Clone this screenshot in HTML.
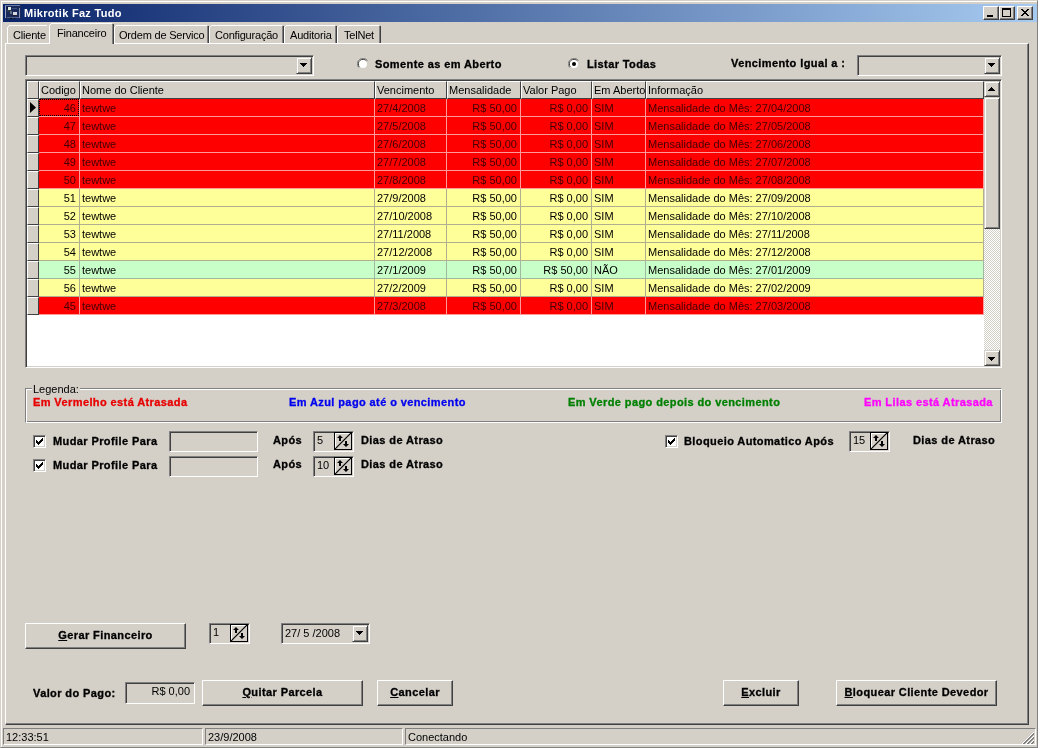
<!DOCTYPE html><html><head><meta charset="utf-8"><style>*{margin:0;padding:0;box-sizing:border-box}
html,body{width:1040px;height:748px;overflow:hidden;background:#fff;font-family:"Liberation Sans",sans-serif;font-size:11px;color:#000;position:relative}
div,span{position:absolute}
.win{left:0;top:0;width:1038px;height:748px;background:#D4D0C8;border:1px solid;border-color:#D4D0C8 #808080 #808080 #D4D0C8;box-shadow:inset 1px 1px #fff}
.title{left:3px;top:4px;width:1034px;height:18px;background:linear-gradient(to right,#0A246A,#A6CAF0)}
.ticon{left:2px;top:1px;width:16px;height:16px}
.ttext{left:21px;top:2px;color:#fff;font-weight:bold;font-size:11px;letter-spacing:0.3px;line-height:14px;white-space:nowrap}
.cbtn{top:2px;width:16px;height:14px;background:#D4D0C8;border:1px solid;border-color:#fff #404040 #404040 #fff;box-shadow:inset -1px -1px #808080}
.page{left:5px;top:43px;width:1024px;height:682px;border:1px solid;border-color:#fff #404040 #404040 #fff;box-shadow:inset -1px -1px #808080}
.tab{top:25px;height:19px;border-style:solid;border-width:1px 1px 0 1px;border-color:#fff #404040 transparent #fff;box-shadow:inset -1px 0 #808080;background:#D4D0C8;text-align:center;line-height:15px;padding-top:2px;white-space:nowrap}
.tab.sel{top:23px;height:21px;z-index:2;padding-top:1px}
.t{white-space:nowrap;line-height:13px}
.b{font-weight:bold;letter-spacing:0.4px;-webkit-text-stroke:0.3px currentColor}
.sunk{border:1px solid;border-color:#808080 #fff #fff #808080;box-shadow:inset 1px 1px #404040,inset -1px -1px #D4D0C8;background:#D4D0C8}
.btn{border:1px solid;border-color:#fff #404040 #404040 #fff;box-shadow:inset -1px -1px #808080;background:#D4D0C8}
.hc{background:#D4D0C8;border-style:solid;border-width:1px;border-color:#fff #404040 #404040 #fff}
.dc{overflow:hidden}
.track{background-color:#fff;background-image:linear-gradient(45deg,#D4D0C8 25%,transparent 25%,transparent 75%,#D4D0C8 75%),linear-gradient(45deg,#D4D0C8 25%,transparent 25%,transparent 75%,#D4D0C8 75%);background-size:2px 2px;background-position:0 0,1px 1px}
.grp{border:1px solid;border-color:#808080 #fff #fff #808080;box-shadow:inset 1px 1px #fff,inset -1px -1px #808080}
.spb{background:#D4D0C8;border:1px solid #000;box-shadow:inset 1px 1px #fff}
.sp{border:1px solid;border-color:#808080 #fff #fff #808080}
.btn2{border:1px solid;border-color:#D4D0C8 #404040 #404040 #D4D0C8;box-shadow:inset 1px 1px #fff,inset -1px -1px #808080;background:#D4D0C8}
</style></head><body><div style="left:0;top:0;width:1040px;height:748px;will-change:transform;overflow:hidden">
<div class="win"></div>
<div class="title"><svg style="position:absolute;left:2px;top:1px" width="16" height="16" viewBox="0 0 16 16" shape-rendering="crispEdges"><rect x="0" y="0" width="16" height="14" fill="#1a2a5a"/><rect x="0" y="0" width="1" height="13" fill="#98a4c4"/><rect x="0" y="0" width="15" height="1" fill="#6878a0"/><rect x="14" y="3" width="1" height="10" fill="#8894b0"/><rect x="2" y="12" width="12" height="1" fill="#50608a"/><rect x="2" y="2" width="2" height="2" fill="#0a1020"/><rect x="3" y="2" width="3" height="3" fill="#e0ece0"/><rect x="2" y="5" width="3" height="2" fill="#303848"/><rect x="7" y="3" width="5" height="1" fill="#405080"/><rect x="5" y="6" width="2" height="3" fill="#687080"/><rect x="8" y="7" width="4" height="3" fill="#d8d8e4"/><rect x="7" y="10" width="5" height="1" fill="#202030"/><rect x="5" y="13" width="2" height="1" fill="#080808"/><rect x="9" y="13" width="1" height="1" fill="#080808"/></svg><span class="ttext">Mikrotik Faz Tudo</span><div class="cbtn" style="left:980px"><svg style="position:absolute;left:3px;top:8px;" width="6" height="2" viewBox="0 0 6 2" shape-rendering="crispEdges"><path d="M0 0h6v1h-6zM0 1h6v1h-6z" fill="#000"/></svg></div><div class="cbtn" style="left:996px"><svg style="position:absolute;left:2px;top:1px;" width="9" height="9" viewBox="0 0 9 9" shape-rendering="crispEdges"><path d="M0 0h9v1h-9zM0 1h9v1h-9zM0 2h1v1h-1zM8 2h1v1h-1zM0 3h1v1h-1zM8 3h1v1h-1zM0 4h1v1h-1zM8 4h1v1h-1zM0 5h1v1h-1zM8 5h1v1h-1zM0 6h1v1h-1zM8 6h1v1h-1zM0 7h1v1h-1zM8 7h1v1h-1zM0 8h9v1h-9z" fill="#000"/></svg></div><div class="cbtn" style="left:1014px"><svg style="position:absolute;left:3px;top:2px;" width="8" height="7" viewBox="0 0 8 7" shape-rendering="crispEdges"><path d="M0 0h2v1h-2zM6 0h2v1h-2zM1 1h2v1h-2zM5 1h2v1h-2zM2 2h4v1h-4zM3 3h2v1h-2zM2 4h4v1h-4zM1 5h2v1h-2zM5 5h2v1h-2zM0 6h2v1h-2zM6 6h2v1h-2z" fill="#000"/></svg></div></div>
<div class="page"></div>
<div style="left:7px;top:25px;width:42px;height:18px;background:#D4D0C8"></div>
<div style="left:9px;top:25px;width:38px;height:1px;background:#fff"></div>
<div style="left:8px;top:26px;width:1px;height:1px;background:#fff"></div>
<div style="left:7px;top:27px;width:1px;height:16px;background:#fff"></div>
<span class="t" style="left:13px;top:29px;letter-spacing:-0.2px;">Cliente</span>
<div style="left:114px;top:25px;width:95px;height:18px;background:#D4D0C8"></div>
<div style="left:116px;top:25px;width:91px;height:1px;background:#fff"></div>
<div style="left:115px;top:26px;width:1px;height:1px;background:#fff"></div>
<div style="left:114px;top:27px;width:1px;height:16px;background:#fff"></div>
<div style="left:208px;top:26px;width:1px;height:17px;background:#404040"></div>
<div style="left:207px;top:26px;width:1px;height:17px;background:#808080"></div>
<span class="t" style="left:119px;top:29px;letter-spacing:-0.2px;">Ordem de Servico</span>
<div style="left:209px;top:25px;width:75px;height:18px;background:#D4D0C8"></div>
<div style="left:211px;top:25px;width:71px;height:1px;background:#fff"></div>
<div style="left:210px;top:26px;width:1px;height:1px;background:#fff"></div>
<div style="left:209px;top:27px;width:1px;height:16px;background:#fff"></div>
<div style="left:283px;top:26px;width:1px;height:17px;background:#404040"></div>
<div style="left:282px;top:26px;width:1px;height:17px;background:#808080"></div>
<span class="t" style="left:215px;top:29px;letter-spacing:-0.2px;">Configuração</span>
<div style="left:284px;top:25px;width:53px;height:18px;background:#D4D0C8"></div>
<div style="left:286px;top:25px;width:49px;height:1px;background:#fff"></div>
<div style="left:285px;top:26px;width:1px;height:1px;background:#fff"></div>
<div style="left:284px;top:27px;width:1px;height:16px;background:#fff"></div>
<div style="left:336px;top:26px;width:1px;height:17px;background:#404040"></div>
<div style="left:335px;top:26px;width:1px;height:17px;background:#808080"></div>
<span class="t" style="left:290px;top:29px;letter-spacing:-0.2px;">Auditoria</span>
<div style="left:337px;top:25px;width:44px;height:18px;background:#D4D0C8"></div>
<div style="left:339px;top:25px;width:40px;height:1px;background:#fff"></div>
<div style="left:338px;top:26px;width:1px;height:1px;background:#fff"></div>
<div style="left:337px;top:27px;width:1px;height:16px;background:#fff"></div>
<div style="left:380px;top:26px;width:1px;height:17px;background:#404040"></div>
<div style="left:379px;top:26px;width:1px;height:17px;background:#808080"></div>
<span class="t" style="left:344px;top:29px;letter-spacing:-0.2px;">TelNet</span>
<div style="left:49px;top:23px;width:65px;height:21px;background:#D4D0C8;z-index:3"></div>
<div style="left:51px;top:23px;width:61px;height:1px;background:#fff;z-index:3"></div>
<div style="left:50px;top:24px;width:1px;height:1px;background:#fff;z-index:3"></div>
<div style="left:49px;top:25px;width:1px;height:19px;background:#fff;z-index:3"></div>
<div style="left:113px;top:24px;width:1px;height:20px;background:#404040;z-index:3"></div>
<div style="left:112px;top:24px;width:1px;height:20px;background:#808080;z-index:3"></div>
<span class="t" style="left:57px;top:27px;letter-spacing:-0.2px;z-index:3">Financeiro</span>
<div class="sunk" style="left:25px;top:55px;width:289px;height:21px"><div class="btn2" style="left:270px;top:1px;width:16px;height:17px"><svg style="position:absolute;left:3px;top:5px;" width="7" height="4" viewBox="0 0 7 4" shape-rendering="crispEdges"><path d="M0 0h7v1h-7zM1 1h5v1h-5zM2 2h3v1h-3zM3 3h1v1h-1z" fill="#000"/></svg></div></div>
<div class="sunk" style="left:857px;top:55px;width:145px;height:21px"><div class="btn2" style="left:126px;top:1px;width:16px;height:17px"><svg style="position:absolute;left:3px;top:5px;" width="7" height="4" viewBox="0 0 7 4" shape-rendering="crispEdges"><path d="M0 0h7v1h-7zM1 1h5v1h-5zM2 2h3v1h-3zM3 3h1v1h-1z" fill="#000"/></svg></div></div>
<svg style="position:absolute;left:357px;top:58px" width="12" height="12" viewBox="0 0 12 12"><path d="M10.5 2.5A5.5 5.5 0 0 0 1.5 9.5" stroke="#808080" fill="none"/><path d="M9.5 3A4.5 4.5 0 0 0 2.5 9" stroke="#404040" fill="none"/><circle cx="6" cy="6" r="4" fill="#fff"/></svg>
<span class="t b" style="left:375px;top:58px">Somente as em Aberto</span>
<svg style="position:absolute;left:568px;top:58px" width="12" height="12" viewBox="0 0 12 12"><path d="M10.5 2.5A5.5 5.5 0 0 0 1.5 9.5" stroke="#808080" fill="none"/><path d="M9.5 3A4.5 4.5 0 0 0 2.5 9" stroke="#404040" fill="none"/><circle cx="6" cy="6" r="4" fill="#fff"/><circle cx="6" cy="6" r="2" fill="#000"/></svg>
<span class="t b" style="left:587px;top:58px">Listar Todas</span>
<span class="t b" style="left:731px;top:57px">Vencimento Igual a :</span>
<div class="sunk" style="left:25px;top:79px;width:977px;height:289px;background:#fff;overflow:hidden">
<div class="hc" style="left:1px;top:1px;width:12px;height:18px"><span class="t" style="left:1px;top:2px"></span></div>
<div class="hc" style="left:13px;top:1px;width:41px;height:18px"><span class="t" style="left:1px;top:2px">Codigo</span></div>
<div class="hc" style="left:54px;top:1px;width:295px;height:18px"><span class="t" style="left:1px;top:2px">Nome do Cliente</span></div>
<div class="hc" style="left:349px;top:1px;width:72px;height:18px"><span class="t" style="left:1px;top:2px">Vencimento</span></div>
<div class="hc" style="left:421px;top:1px;width:74px;height:18px"><span class="t" style="left:1px;top:2px">Mensalidade</span></div>
<div class="hc" style="left:495px;top:1px;width:71px;height:18px"><span class="t" style="left:1px;top:2px">Valor Pago</span></div>
<div class="hc" style="left:566px;top:1px;width:54px;height:18px"><span class="t" style="left:1px;top:2px">Em Aberto</span></div>
<div class="hc" style="left:620px;top:1px;width:338px;height:18px"><span class="t" style="left:1px;top:2px">Informação</span></div>
<div class="hc" style="left:1px;top:19px;width:12px;height:18px"></div>
<svg style="position:absolute;left:4px;top:22px" width="6" height="11" viewBox="0 0 6 11"><path d="M0 0L6 5.5L0 11z" fill="#000"/></svg>
<div class="dc" style="left:13px;top:19px;width:41px;height:18px;background:#FF0000;color:#400000;border-right:1px solid #FF9A9A;border-bottom:1px solid #FF9A9A"><span class="t" style="right:3px;top:3px">46</span></div>
<div class="dc" style="left:54px;top:19px;width:295px;height:18px;background:#FF0000;color:#400000;border-right:1px solid #FF9A9A;border-bottom:1px solid #FF9A9A"><span class="t" style="left:2px;top:3px">tewtwe</span></div>
<div class="dc" style="left:349px;top:19px;width:72px;height:18px;background:#FF0000;color:#400000;border-right:1px solid #FF9A9A;border-bottom:1px solid #FF9A9A"><span class="t" style="left:2px;top:3px">27/4/2008</span></div>
<div class="dc" style="left:421px;top:19px;width:74px;height:18px;background:#FF0000;color:#400000;border-right:1px solid #FF9A9A;border-bottom:1px solid #FF9A9A"><span class="t" style="right:3px;top:3px">R$ 50,00</span></div>
<div class="dc" style="left:495px;top:19px;width:71px;height:18px;background:#FF0000;color:#400000;border-right:1px solid #FF9A9A;border-bottom:1px solid #FF9A9A"><span class="t" style="right:3px;top:3px">R$ 0,00</span></div>
<div class="dc" style="left:566px;top:19px;width:54px;height:18px;background:#FF0000;color:#400000;border-right:1px solid #FF9A9A;border-bottom:1px solid #FF9A9A"><span class="t" style="left:2px;top:3px">SIM</span></div>
<div class="dc" style="left:620px;top:19px;width:338px;height:18px;background:#FF0000;color:#400000;border-right:1px solid #FF9A9A;border-bottom:1px solid #FF9A9A"><span class="t" style="left:2px;top:3px">Mensalidade do Mês: 27/04/2008</span></div>
<div class="hc" style="left:1px;top:37px;width:12px;height:18px"></div>
<div class="dc" style="left:13px;top:37px;width:41px;height:18px;background:#FF0000;color:#400000;border-right:1px solid #FF9A9A;border-bottom:1px solid #FF9A9A"><span class="t" style="right:3px;top:3px">47</span></div>
<div class="dc" style="left:54px;top:37px;width:295px;height:18px;background:#FF0000;color:#400000;border-right:1px solid #FF9A9A;border-bottom:1px solid #FF9A9A"><span class="t" style="left:2px;top:3px">tewtwe</span></div>
<div class="dc" style="left:349px;top:37px;width:72px;height:18px;background:#FF0000;color:#400000;border-right:1px solid #FF9A9A;border-bottom:1px solid #FF9A9A"><span class="t" style="left:2px;top:3px">27/5/2008</span></div>
<div class="dc" style="left:421px;top:37px;width:74px;height:18px;background:#FF0000;color:#400000;border-right:1px solid #FF9A9A;border-bottom:1px solid #FF9A9A"><span class="t" style="right:3px;top:3px">R$ 50,00</span></div>
<div class="dc" style="left:495px;top:37px;width:71px;height:18px;background:#FF0000;color:#400000;border-right:1px solid #FF9A9A;border-bottom:1px solid #FF9A9A"><span class="t" style="right:3px;top:3px">R$ 0,00</span></div>
<div class="dc" style="left:566px;top:37px;width:54px;height:18px;background:#FF0000;color:#400000;border-right:1px solid #FF9A9A;border-bottom:1px solid #FF9A9A"><span class="t" style="left:2px;top:3px">SIM</span></div>
<div class="dc" style="left:620px;top:37px;width:338px;height:18px;background:#FF0000;color:#400000;border-right:1px solid #FF9A9A;border-bottom:1px solid #FF9A9A"><span class="t" style="left:2px;top:3px">Mensalidade do Mês: 27/05/2008</span></div>
<div class="hc" style="left:1px;top:55px;width:12px;height:18px"></div>
<div class="dc" style="left:13px;top:55px;width:41px;height:18px;background:#FF0000;color:#400000;border-right:1px solid #FF9A9A;border-bottom:1px solid #FF9A9A"><span class="t" style="right:3px;top:3px">48</span></div>
<div class="dc" style="left:54px;top:55px;width:295px;height:18px;background:#FF0000;color:#400000;border-right:1px solid #FF9A9A;border-bottom:1px solid #FF9A9A"><span class="t" style="left:2px;top:3px">tewtwe</span></div>
<div class="dc" style="left:349px;top:55px;width:72px;height:18px;background:#FF0000;color:#400000;border-right:1px solid #FF9A9A;border-bottom:1px solid #FF9A9A"><span class="t" style="left:2px;top:3px">27/6/2008</span></div>
<div class="dc" style="left:421px;top:55px;width:74px;height:18px;background:#FF0000;color:#400000;border-right:1px solid #FF9A9A;border-bottom:1px solid #FF9A9A"><span class="t" style="right:3px;top:3px">R$ 50,00</span></div>
<div class="dc" style="left:495px;top:55px;width:71px;height:18px;background:#FF0000;color:#400000;border-right:1px solid #FF9A9A;border-bottom:1px solid #FF9A9A"><span class="t" style="right:3px;top:3px">R$ 0,00</span></div>
<div class="dc" style="left:566px;top:55px;width:54px;height:18px;background:#FF0000;color:#400000;border-right:1px solid #FF9A9A;border-bottom:1px solid #FF9A9A"><span class="t" style="left:2px;top:3px">SIM</span></div>
<div class="dc" style="left:620px;top:55px;width:338px;height:18px;background:#FF0000;color:#400000;border-right:1px solid #FF9A9A;border-bottom:1px solid #FF9A9A"><span class="t" style="left:2px;top:3px">Mensalidade do Mês: 27/06/2008</span></div>
<div class="hc" style="left:1px;top:73px;width:12px;height:18px"></div>
<div class="dc" style="left:13px;top:73px;width:41px;height:18px;background:#FF0000;color:#400000;border-right:1px solid #FF9A9A;border-bottom:1px solid #FF9A9A"><span class="t" style="right:3px;top:3px">49</span></div>
<div class="dc" style="left:54px;top:73px;width:295px;height:18px;background:#FF0000;color:#400000;border-right:1px solid #FF9A9A;border-bottom:1px solid #FF9A9A"><span class="t" style="left:2px;top:3px">tewtwe</span></div>
<div class="dc" style="left:349px;top:73px;width:72px;height:18px;background:#FF0000;color:#400000;border-right:1px solid #FF9A9A;border-bottom:1px solid #FF9A9A"><span class="t" style="left:2px;top:3px">27/7/2008</span></div>
<div class="dc" style="left:421px;top:73px;width:74px;height:18px;background:#FF0000;color:#400000;border-right:1px solid #FF9A9A;border-bottom:1px solid #FF9A9A"><span class="t" style="right:3px;top:3px">R$ 50,00</span></div>
<div class="dc" style="left:495px;top:73px;width:71px;height:18px;background:#FF0000;color:#400000;border-right:1px solid #FF9A9A;border-bottom:1px solid #FF9A9A"><span class="t" style="right:3px;top:3px">R$ 0,00</span></div>
<div class="dc" style="left:566px;top:73px;width:54px;height:18px;background:#FF0000;color:#400000;border-right:1px solid #FF9A9A;border-bottom:1px solid #FF9A9A"><span class="t" style="left:2px;top:3px">SIM</span></div>
<div class="dc" style="left:620px;top:73px;width:338px;height:18px;background:#FF0000;color:#400000;border-right:1px solid #FF9A9A;border-bottom:1px solid #FF9A9A"><span class="t" style="left:2px;top:3px">Mensalidade do Mês: 27/07/2008</span></div>
<div class="hc" style="left:1px;top:91px;width:12px;height:18px"></div>
<div class="dc" style="left:13px;top:91px;width:41px;height:18px;background:#FF0000;color:#400000;border-right:1px solid #FF9A9A;border-bottom:1px solid #FF9A9A"><span class="t" style="right:3px;top:3px">50</span></div>
<div class="dc" style="left:54px;top:91px;width:295px;height:18px;background:#FF0000;color:#400000;border-right:1px solid #FF9A9A;border-bottom:1px solid #FF9A9A"><span class="t" style="left:2px;top:3px">tewtwe</span></div>
<div class="dc" style="left:349px;top:91px;width:72px;height:18px;background:#FF0000;color:#400000;border-right:1px solid #FF9A9A;border-bottom:1px solid #FF9A9A"><span class="t" style="left:2px;top:3px">27/8/2008</span></div>
<div class="dc" style="left:421px;top:91px;width:74px;height:18px;background:#FF0000;color:#400000;border-right:1px solid #FF9A9A;border-bottom:1px solid #FF9A9A"><span class="t" style="right:3px;top:3px">R$ 50,00</span></div>
<div class="dc" style="left:495px;top:91px;width:71px;height:18px;background:#FF0000;color:#400000;border-right:1px solid #FF9A9A;border-bottom:1px solid #FF9A9A"><span class="t" style="right:3px;top:3px">R$ 0,00</span></div>
<div class="dc" style="left:566px;top:91px;width:54px;height:18px;background:#FF0000;color:#400000;border-right:1px solid #FF9A9A;border-bottom:1px solid #FF9A9A"><span class="t" style="left:2px;top:3px">SIM</span></div>
<div class="dc" style="left:620px;top:91px;width:338px;height:18px;background:#FF0000;color:#400000;border-right:1px solid #FF9A9A;border-bottom:1px solid #FF9A9A"><span class="t" style="left:2px;top:3px">Mensalidade do Mês: 27/08/2008</span></div>
<div class="hc" style="left:1px;top:109px;width:12px;height:18px"></div>
<div class="dc" style="left:13px;top:109px;width:41px;height:18px;background:#FFFF99;color:#000;border-right:1px solid #B0B090;border-bottom:1px solid #B0B090"><span class="t" style="right:3px;top:3px">51</span></div>
<div class="dc" style="left:54px;top:109px;width:295px;height:18px;background:#FFFF99;color:#000;border-right:1px solid #B0B090;border-bottom:1px solid #B0B090"><span class="t" style="left:2px;top:3px">tewtwe</span></div>
<div class="dc" style="left:349px;top:109px;width:72px;height:18px;background:#FFFF99;color:#000;border-right:1px solid #B0B090;border-bottom:1px solid #B0B090"><span class="t" style="left:2px;top:3px">27/9/2008</span></div>
<div class="dc" style="left:421px;top:109px;width:74px;height:18px;background:#FFFF99;color:#000;border-right:1px solid #B0B090;border-bottom:1px solid #B0B090"><span class="t" style="right:3px;top:3px">R$ 50,00</span></div>
<div class="dc" style="left:495px;top:109px;width:71px;height:18px;background:#FFFF99;color:#000;border-right:1px solid #B0B090;border-bottom:1px solid #B0B090"><span class="t" style="right:3px;top:3px">R$ 0,00</span></div>
<div class="dc" style="left:566px;top:109px;width:54px;height:18px;background:#FFFF99;color:#000;border-right:1px solid #B0B090;border-bottom:1px solid #B0B090"><span class="t" style="left:2px;top:3px">SIM</span></div>
<div class="dc" style="left:620px;top:109px;width:338px;height:18px;background:#FFFF99;color:#000;border-right:1px solid #B0B090;border-bottom:1px solid #B0B090"><span class="t" style="left:2px;top:3px">Mensalidade do Mês: 27/09/2008</span></div>
<div class="hc" style="left:1px;top:127px;width:12px;height:18px"></div>
<div class="dc" style="left:13px;top:127px;width:41px;height:18px;background:#FFFF99;color:#000;border-right:1px solid #B0B090;border-bottom:1px solid #B0B090"><span class="t" style="right:3px;top:3px">52</span></div>
<div class="dc" style="left:54px;top:127px;width:295px;height:18px;background:#FFFF99;color:#000;border-right:1px solid #B0B090;border-bottom:1px solid #B0B090"><span class="t" style="left:2px;top:3px">tewtwe</span></div>
<div class="dc" style="left:349px;top:127px;width:72px;height:18px;background:#FFFF99;color:#000;border-right:1px solid #B0B090;border-bottom:1px solid #B0B090"><span class="t" style="left:2px;top:3px">27/10/2008</span></div>
<div class="dc" style="left:421px;top:127px;width:74px;height:18px;background:#FFFF99;color:#000;border-right:1px solid #B0B090;border-bottom:1px solid #B0B090"><span class="t" style="right:3px;top:3px">R$ 50,00</span></div>
<div class="dc" style="left:495px;top:127px;width:71px;height:18px;background:#FFFF99;color:#000;border-right:1px solid #B0B090;border-bottom:1px solid #B0B090"><span class="t" style="right:3px;top:3px">R$ 0,00</span></div>
<div class="dc" style="left:566px;top:127px;width:54px;height:18px;background:#FFFF99;color:#000;border-right:1px solid #B0B090;border-bottom:1px solid #B0B090"><span class="t" style="left:2px;top:3px">SIM</span></div>
<div class="dc" style="left:620px;top:127px;width:338px;height:18px;background:#FFFF99;color:#000;border-right:1px solid #B0B090;border-bottom:1px solid #B0B090"><span class="t" style="left:2px;top:3px">Mensalidade do Mês: 27/10/2008</span></div>
<div class="hc" style="left:1px;top:145px;width:12px;height:18px"></div>
<div class="dc" style="left:13px;top:145px;width:41px;height:18px;background:#FFFF99;color:#000;border-right:1px solid #B0B090;border-bottom:1px solid #B0B090"><span class="t" style="right:3px;top:3px">53</span></div>
<div class="dc" style="left:54px;top:145px;width:295px;height:18px;background:#FFFF99;color:#000;border-right:1px solid #B0B090;border-bottom:1px solid #B0B090"><span class="t" style="left:2px;top:3px">tewtwe</span></div>
<div class="dc" style="left:349px;top:145px;width:72px;height:18px;background:#FFFF99;color:#000;border-right:1px solid #B0B090;border-bottom:1px solid #B0B090"><span class="t" style="left:2px;top:3px">27/11/2008</span></div>
<div class="dc" style="left:421px;top:145px;width:74px;height:18px;background:#FFFF99;color:#000;border-right:1px solid #B0B090;border-bottom:1px solid #B0B090"><span class="t" style="right:3px;top:3px">R$ 50,00</span></div>
<div class="dc" style="left:495px;top:145px;width:71px;height:18px;background:#FFFF99;color:#000;border-right:1px solid #B0B090;border-bottom:1px solid #B0B090"><span class="t" style="right:3px;top:3px">R$ 0,00</span></div>
<div class="dc" style="left:566px;top:145px;width:54px;height:18px;background:#FFFF99;color:#000;border-right:1px solid #B0B090;border-bottom:1px solid #B0B090"><span class="t" style="left:2px;top:3px">SIM</span></div>
<div class="dc" style="left:620px;top:145px;width:338px;height:18px;background:#FFFF99;color:#000;border-right:1px solid #B0B090;border-bottom:1px solid #B0B090"><span class="t" style="left:2px;top:3px">Mensalidade do Mês: 27/11/2008</span></div>
<div class="hc" style="left:1px;top:163px;width:12px;height:18px"></div>
<div class="dc" style="left:13px;top:163px;width:41px;height:18px;background:#FFFF99;color:#000;border-right:1px solid #B0B090;border-bottom:1px solid #B0B090"><span class="t" style="right:3px;top:3px">54</span></div>
<div class="dc" style="left:54px;top:163px;width:295px;height:18px;background:#FFFF99;color:#000;border-right:1px solid #B0B090;border-bottom:1px solid #B0B090"><span class="t" style="left:2px;top:3px">tewtwe</span></div>
<div class="dc" style="left:349px;top:163px;width:72px;height:18px;background:#FFFF99;color:#000;border-right:1px solid #B0B090;border-bottom:1px solid #B0B090"><span class="t" style="left:2px;top:3px">27/12/2008</span></div>
<div class="dc" style="left:421px;top:163px;width:74px;height:18px;background:#FFFF99;color:#000;border-right:1px solid #B0B090;border-bottom:1px solid #B0B090"><span class="t" style="right:3px;top:3px">R$ 50,00</span></div>
<div class="dc" style="left:495px;top:163px;width:71px;height:18px;background:#FFFF99;color:#000;border-right:1px solid #B0B090;border-bottom:1px solid #B0B090"><span class="t" style="right:3px;top:3px">R$ 0,00</span></div>
<div class="dc" style="left:566px;top:163px;width:54px;height:18px;background:#FFFF99;color:#000;border-right:1px solid #B0B090;border-bottom:1px solid #B0B090"><span class="t" style="left:2px;top:3px">SIM</span></div>
<div class="dc" style="left:620px;top:163px;width:338px;height:18px;background:#FFFF99;color:#000;border-right:1px solid #B0B090;border-bottom:1px solid #B0B090"><span class="t" style="left:2px;top:3px">Mensalidade do Mês: 27/12/2008</span></div>
<div class="hc" style="left:1px;top:181px;width:12px;height:18px"></div>
<div class="dc" style="left:13px;top:181px;width:41px;height:18px;background:#C8FFC8;color:#000;border-right:1px solid #A0B8A0;border-bottom:1px solid #A0B8A0"><span class="t" style="right:3px;top:3px">55</span></div>
<div class="dc" style="left:54px;top:181px;width:295px;height:18px;background:#C8FFC8;color:#000;border-right:1px solid #A0B8A0;border-bottom:1px solid #A0B8A0"><span class="t" style="left:2px;top:3px">tewtwe</span></div>
<div class="dc" style="left:349px;top:181px;width:72px;height:18px;background:#C8FFC8;color:#000;border-right:1px solid #A0B8A0;border-bottom:1px solid #A0B8A0"><span class="t" style="left:2px;top:3px">27/1/2009</span></div>
<div class="dc" style="left:421px;top:181px;width:74px;height:18px;background:#C8FFC8;color:#000;border-right:1px solid #A0B8A0;border-bottom:1px solid #A0B8A0"><span class="t" style="right:3px;top:3px">R$ 50,00</span></div>
<div class="dc" style="left:495px;top:181px;width:71px;height:18px;background:#C8FFC8;color:#000;border-right:1px solid #A0B8A0;border-bottom:1px solid #A0B8A0"><span class="t" style="right:3px;top:3px">R$ 50,00</span></div>
<div class="dc" style="left:566px;top:181px;width:54px;height:18px;background:#C8FFC8;color:#000;border-right:1px solid #A0B8A0;border-bottom:1px solid #A0B8A0"><span class="t" style="left:2px;top:3px">NÃO</span></div>
<div class="dc" style="left:620px;top:181px;width:338px;height:18px;background:#C8FFC8;color:#000;border-right:1px solid #A0B8A0;border-bottom:1px solid #A0B8A0"><span class="t" style="left:2px;top:3px">Mensalidade do Mês: 27/01/2009</span></div>
<div class="hc" style="left:1px;top:199px;width:12px;height:18px"></div>
<div class="dc" style="left:13px;top:199px;width:41px;height:18px;background:#FFFF99;color:#000;border-right:1px solid #B0B090;border-bottom:1px solid #B0B090"><span class="t" style="right:3px;top:3px">56</span></div>
<div class="dc" style="left:54px;top:199px;width:295px;height:18px;background:#FFFF99;color:#000;border-right:1px solid #B0B090;border-bottom:1px solid #B0B090"><span class="t" style="left:2px;top:3px">tewtwe</span></div>
<div class="dc" style="left:349px;top:199px;width:72px;height:18px;background:#FFFF99;color:#000;border-right:1px solid #B0B090;border-bottom:1px solid #B0B090"><span class="t" style="left:2px;top:3px">27/2/2009</span></div>
<div class="dc" style="left:421px;top:199px;width:74px;height:18px;background:#FFFF99;color:#000;border-right:1px solid #B0B090;border-bottom:1px solid #B0B090"><span class="t" style="right:3px;top:3px">R$ 50,00</span></div>
<div class="dc" style="left:495px;top:199px;width:71px;height:18px;background:#FFFF99;color:#000;border-right:1px solid #B0B090;border-bottom:1px solid #B0B090"><span class="t" style="right:3px;top:3px">R$ 0,00</span></div>
<div class="dc" style="left:566px;top:199px;width:54px;height:18px;background:#FFFF99;color:#000;border-right:1px solid #B0B090;border-bottom:1px solid #B0B090"><span class="t" style="left:2px;top:3px">SIM</span></div>
<div class="dc" style="left:620px;top:199px;width:338px;height:18px;background:#FFFF99;color:#000;border-right:1px solid #B0B090;border-bottom:1px solid #B0B090"><span class="t" style="left:2px;top:3px">Mensalidade do Mês: 27/02/2009</span></div>
<div class="hc" style="left:1px;top:217px;width:12px;height:18px"></div>
<div class="dc" style="left:13px;top:217px;width:41px;height:18px;background:#FF0000;color:#400000;border-right:1px solid #FF9A9A;border-bottom:1px solid #FF9A9A"><span class="t" style="right:3px;top:3px">45</span></div>
<div class="dc" style="left:54px;top:217px;width:295px;height:18px;background:#FF0000;color:#400000;border-right:1px solid #FF9A9A;border-bottom:1px solid #FF9A9A"><span class="t" style="left:2px;top:3px">tewtwe</span></div>
<div class="dc" style="left:349px;top:217px;width:72px;height:18px;background:#FF0000;color:#400000;border-right:1px solid #FF9A9A;border-bottom:1px solid #FF9A9A"><span class="t" style="left:2px;top:3px">27/3/2008</span></div>
<div class="dc" style="left:421px;top:217px;width:74px;height:18px;background:#FF0000;color:#400000;border-right:1px solid #FF9A9A;border-bottom:1px solid #FF9A9A"><span class="t" style="right:3px;top:3px">R$ 50,00</span></div>
<div class="dc" style="left:495px;top:217px;width:71px;height:18px;background:#FF0000;color:#400000;border-right:1px solid #FF9A9A;border-bottom:1px solid #FF9A9A"><span class="t" style="right:3px;top:3px">R$ 0,00</span></div>
<div class="dc" style="left:566px;top:217px;width:54px;height:18px;background:#FF0000;color:#400000;border-right:1px solid #FF9A9A;border-bottom:1px solid #FF9A9A"><span class="t" style="left:2px;top:3px">SIM</span></div>
<div class="dc" style="left:620px;top:217px;width:338px;height:18px;background:#FF0000;color:#400000;border-right:1px solid #FF9A9A;border-bottom:1px solid #FF9A9A"><span class="t" style="left:2px;top:3px">Mensalidade do Mês: 27/03/2008</span></div>
<div style="left:13px;top:19px;width:40px;height:17px;border:1px dotted #000"></div>
<div class="track" style="left:958px;top:1px;width:16px;height:285px"></div>
<div class="btn2" style="left:958px;top:1px;width:16px;height:16px"><svg style="position:absolute;left:3px;top:5px;" width="7" height="4" viewBox="0 0 7 4" shape-rendering="crispEdges"><path d="M3 0h1v1h-1zM2 1h3v1h-3zM1 2h5v1h-5zM0 3h7v1h-7z" fill="#000"/></svg></div>
<div class="btn2" style="left:958px;top:17px;width:16px;height:132px"></div>
<div class="btn2" style="left:958px;top:270px;width:16px;height:16px"><svg style="position:absolute;left:3px;top:6px;" width="7" height="4" viewBox="0 0 7 4" shape-rendering="crispEdges"><path d="M0 0h7v1h-7zM1 1h5v1h-5zM2 2h3v1h-3zM3 3h1v1h-1z" fill="#000"/></svg></div>
</div>
<div class="grp" style="left:25px;top:388px;width:977px;height:35px"></div>
<span class="t" style="left:32px;top:383px;background:#D4D0C8;padding:0 1px">Legenda:</span>
<span class="t b" style="left:33px;top:396px;color:#E80000">Em Vermelho está Atrasada</span>
<span class="t b" style="left:289px;top:396px;color:#0000F0">Em Azul pago até o vencimento</span>
<span class="t b" style="left:568px;top:396px;color:#008000">Em Verde pago depois do vencimento</span>
<span class="t b" style="left:864px;top:396px;color:#FF00FF">Em Lilas está Atrasada</span>
<div class="sunk" style="left:33px;top:435px;width:13px;height:13px;background:#fff"><svg style="position:absolute;left:2px;top:2px;" width="7" height="7" viewBox="0 0 7 7" shape-rendering="crispEdges"><path d="M6 0h1v1h-1zM5 1h2v1h-2zM0 2h1v1h-1zM4 2h3v1h-3zM0 3h2v1h-2zM3 3h3v1h-3zM0 4h5v1h-5zM1 5h3v1h-3zM2 6h1v1h-1z" fill="#000"/></svg></div>
<span class="t b" style="left:53px;top:435px">Mudar Profile Para</span>
<div class="sunk" style="left:169px;top:431px;width:89px;height:21px"></div>
<span class="t b" style="left:273px;top:434px">Após</span>
<div class="sunk" style="left:313px;top:431px;width:41px;height:21px"><span class="t" style="left:3px;top:2px;color:#000">5</span><div class="spb" style="left:20px;top:0px;width:18px;height:18px"><svg width="16" height="16" viewBox="0 0 16 16" style="position:absolute;left:0;top:0"><path d="M0 16L16 0" stroke="#000" stroke-width="1.2"/><path d="M5 2L2 5h2v3h2V5h2z" fill="#000"/><path d="M11 14l3-3h-2V8h-2v3H8z" fill="#000"/></svg></div></div>
<span class="t b" style="left:361px;top:434px">Dias de Atraso</span>
<div class="sunk" style="left:33px;top:459px;width:13px;height:13px;background:#fff"><svg style="position:absolute;left:2px;top:2px;" width="7" height="7" viewBox="0 0 7 7" shape-rendering="crispEdges"><path d="M6 0h1v1h-1zM5 1h2v1h-2zM0 2h1v1h-1zM4 2h3v1h-3zM0 3h2v1h-2zM3 3h3v1h-3zM0 4h5v1h-5zM1 5h3v1h-3zM2 6h1v1h-1z" fill="#000"/></svg></div>
<span class="t b" style="left:53px;top:459px">Mudar Profile Para</span>
<div class="sunk" style="left:169px;top:456px;width:89px;height:21px"></div>
<span class="t b" style="left:273px;top:458px">Após</span>
<div class="sunk" style="left:313px;top:456px;width:41px;height:21px"><span class="t" style="left:3px;top:2px;color:#000">10</span><div class="spb" style="left:20px;top:0px;width:18px;height:18px"><svg width="16" height="16" viewBox="0 0 16 16" style="position:absolute;left:0;top:0"><path d="M0 16L16 0" stroke="#000" stroke-width="1.2"/><path d="M5 2L2 5h2v3h2V5h2z" fill="#000"/><path d="M11 14l3-3h-2V8h-2v3H8z" fill="#000"/></svg></div></div>
<span class="t b" style="left:361px;top:458px">Dias de Atraso</span>
<div class="sunk" style="left:665px;top:435px;width:13px;height:13px;background:#fff"><svg style="position:absolute;left:2px;top:2px;" width="7" height="7" viewBox="0 0 7 7" shape-rendering="crispEdges"><path d="M6 0h1v1h-1zM5 1h2v1h-2zM0 2h1v1h-1zM4 2h3v1h-3zM0 3h2v1h-2zM3 3h3v1h-3zM0 4h5v1h-5zM1 5h3v1h-3zM2 6h1v1h-1z" fill="#000"/></svg></div>
<span class="t b" style="left:684px;top:435px">Bloqueio Automatico Após</span>
<div class="sunk" style="left:849px;top:431px;width:41px;height:21px"><span class="t" style="left:3px;top:2px;color:#000">15</span><div class="spb" style="left:20px;top:0px;width:18px;height:18px"><svg width="16" height="16" viewBox="0 0 16 16" style="position:absolute;left:0;top:0"><path d="M0 16L16 0" stroke="#000" stroke-width="1.2"/><path d="M5 2L2 5h2v3h2V5h2z" fill="#000"/><path d="M11 14l3-3h-2V8h-2v3H8z" fill="#000"/></svg></div></div>
<span class="t b" style="left:913px;top:434px">Dias de Atraso</span>
<div class="btn" style="left:25px;top:623px;width:161px;height:26px"><div class="t b bt" style="left:0;top:5px;width:159px;text-align:center"><u>G</u>erar Financeiro</div></div>
<div class="sunk" style="left:209px;top:623px;width:41px;height:21px"><span class="t" style="left:3px;top:2px;color:#000">1</span><div class="spb" style="left:20px;top:0px;width:18px;height:18px"><svg width="16" height="16" viewBox="0 0 16 16" style="position:absolute;left:0;top:0"><path d="M0 16L16 0" stroke="#000" stroke-width="1.2"/><path d="M5 2L2 5h2v3h2V5h2z" fill="#000"/><path d="M11 14l3-3h-2V8h-2v3H8z" fill="#000"/></svg></div></div>
<div class="sunk" style="left:281px;top:623px;width:89px;height:21px"><div class="btn2" style="left:70px;top:1px;width:16px;height:17px"><svg style="position:absolute;left:3px;top:5px;" width="7" height="4" viewBox="0 0 7 4" shape-rendering="crispEdges"><path d="M0 0h7v1h-7zM1 1h5v1h-5zM2 2h3v1h-3zM3 3h1v1h-1z" fill="#000"/></svg></div><span class="t" style="left:3px;top:3px">27/ 5 /2008</span></div>
<span class="t b" style="left:33px;top:687px">Valor do Pago:</span>
<div class="sunk" style="left:125px;top:682px;width:70px;height:22px"><span class="t" style="right:4px;top:2px">R$ 0,00</span></div>
<div class="btn" style="left:202px;top:680px;width:161px;height:26px"><div class="t b bt" style="left:0;top:5px;width:159px;text-align:center"><u>Q</u>uitar Parcela</div></div>
<div class="btn" style="left:377px;top:680px;width:76px;height:26px"><div class="t b bt" style="left:0;top:5px;width:74px;text-align:center"><u>C</u>ancelar</div></div>
<div class="btn" style="left:723px;top:680px;width:76px;height:26px"><div class="t b bt" style="left:0;top:5px;width:74px;text-align:center"><u>E</u>xcluir</div></div>
<div class="btn" style="left:836px;top:680px;width:161px;height:26px"><div class="t b bt" style="left:0;top:5px;width:159px;text-align:center"><u>B</u>loquear Cliente Devedor</div></div>
<div class="sp" style="left:3px;top:728px;width:200px;height:17px"><span class="t" style="left:2px;top:2px">12:33:51</span></div>
<div class="sp" style="left:205px;top:728px;width:198px;height:17px"><span class="t" style="left:2px;top:2px">23/9/2008</span></div>
<div class="sp" style="left:405px;top:728px;width:631px;height:17px"><span class="t" style="left:2px;top:2px">Conectando</span></div>
<svg style="position:absolute;left:1022px;top:732px;" width="12" height="12" viewBox="0 0 12 12" shape-rendering="crispEdges"><path d="M11 0h1v1h-1zM10 1h1v1h-1zM9 2h1v1h-1zM8 3h1v1h-1zM7 4h1v1h-1zM11 4h1v1h-1zM6 5h1v1h-1zM10 5h1v1h-1zM5 6h1v1h-1zM9 6h1v1h-1zM4 7h1v1h-1zM8 7h1v1h-1zM3 8h1v1h-1zM7 8h1v1h-1zM11 8h1v1h-1zM2 9h1v1h-1zM6 9h1v1h-1zM10 9h1v1h-1zM1 10h1v1h-1zM5 10h1v1h-1zM9 10h1v1h-1zM0 11h1v1h-1zM4 11h1v1h-1zM8 11h1v1h-1z" fill="#fff"/></svg>
<svg style="position:absolute;left:1022px;top:732px;" width="12" height="12" viewBox="0 0 12 12" shape-rendering="crispEdges"><path d="M11 1h1v1h-1zM10 2h2v1h-2zM9 3h2v1h-2zM8 4h2v1h-2zM7 5h2v1h-2zM11 5h1v1h-1zM6 6h2v1h-2zM10 6h2v1h-2zM5 7h2v1h-2zM9 7h2v1h-2zM4 8h2v1h-2zM8 8h2v1h-2zM3 9h2v1h-2zM7 9h2v1h-2zM11 9h1v1h-1zM2 10h2v1h-2zM6 10h2v1h-2zM10 10h2v1h-2zM1 11h2v1h-2zM5 11h2v1h-2zM9 11h2v1h-2z" fill="#808080"/></svg>
</div></body></html>
